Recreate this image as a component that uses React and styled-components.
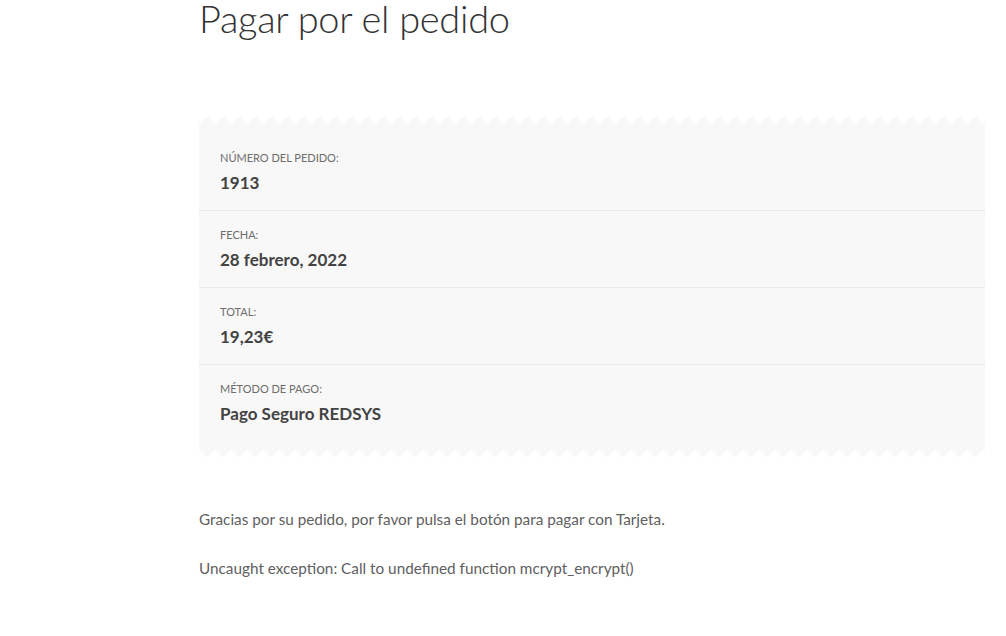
import React from "react";
import styled, { createGlobalStyle } from "styled-components";

const PANEL = "#f8f8f8";

const details = [
  { label: "Número del pedido:", value: "1913" },
  { label: "Fecha:", value: "28 febrero, 2022" },
  { label: "Total:", value: "19,23€" },
  { label: "Método de pago:", value: "Pago Seguro REDSYS" },
];

const App = () => {
  return (
    <StPage>
      <GlobalStyle />
      <StTitle>Pagar por el pedido</StTitle>

      <StOverview>
        <StEdge />
        <StList>
          {details.map((item, i) => (
            <StItem key={item.label} last={i === details.length - 1}>
              <StLabel>{item.label}</StLabel>
              <StValue>{item.value}</StValue>
            </StItem>
          ))}
        </StList>
        <StEdge bottom />
      </StOverview>

      <StText>
        Gracias por su pedido, por favor pulsa el botón para pagar con Tarjeta.
      </StText>
      <StText>Uncaught exception: Call to undefined function mcrypt_encrypt()</StText>
    </StPage>
  );
};

export default App;

const GlobalStyle = createGlobalStyle`
  html, body {
    margin: 0;
    background: #fff;
  }
  body {
    font-family: Lato, "Open Sans", sans-serif;
    color: #6d6d6d;
  }
`;

const StPage = styled.main`
  width: 786px;
  margin-left: 199px;
`;

const StTitle = styled.h1`
  margin: 0;
  font-family: Lato, sans-serif;
  font-weight: 300;
  font-size: 38px;
  line-height: 36px;
  color: #333;
  letter-spacing: -0.3px;
`;

const StOverview = styled.section`
  margin-top: 80px;
  margin-bottom: 51px;
`;

const StEdge = styled.div`
  height: 8px;
  background-image: ${({ bottom }) =>
    bottom
      ? `conic-gradient(from -45deg at 50% 100%, ${PANEL} 90deg, transparent 0)`
      : `conic-gradient(from 135deg at 50% 0, ${PANEL} 90deg, transparent 0)`};
  background-size: 16px 8px;
  background-repeat: repeat-x;
`;

const StList = styled.ul`
  list-style: none;
  margin: 0;
  padding: 10px 0 7px;
  background: ${PANEL};
`;

const StItem = styled.li`
  height: 77px;
  box-sizing: border-box;
  padding: 16px 21px 0;
  border-bottom: ${({ last }) => (last ? "none" : "1px solid #e8e8e8")};
`;

const StLabel = styled.div`
  font-size: 11px;
  line-height: 16px;
  text-transform: uppercase;
  color: #6d6d6d;
`;

const StValue = styled.div`
  margin-top: 6px;
  font-size: 17px;
  line-height: 22px;
  font-weight: 700;
  color: #434343;
`;

const StText = styled.p`
  margin: 0 0 26px;
  font-size: 15.3px;
  line-height: 23px;
  color: #606060;
`;
